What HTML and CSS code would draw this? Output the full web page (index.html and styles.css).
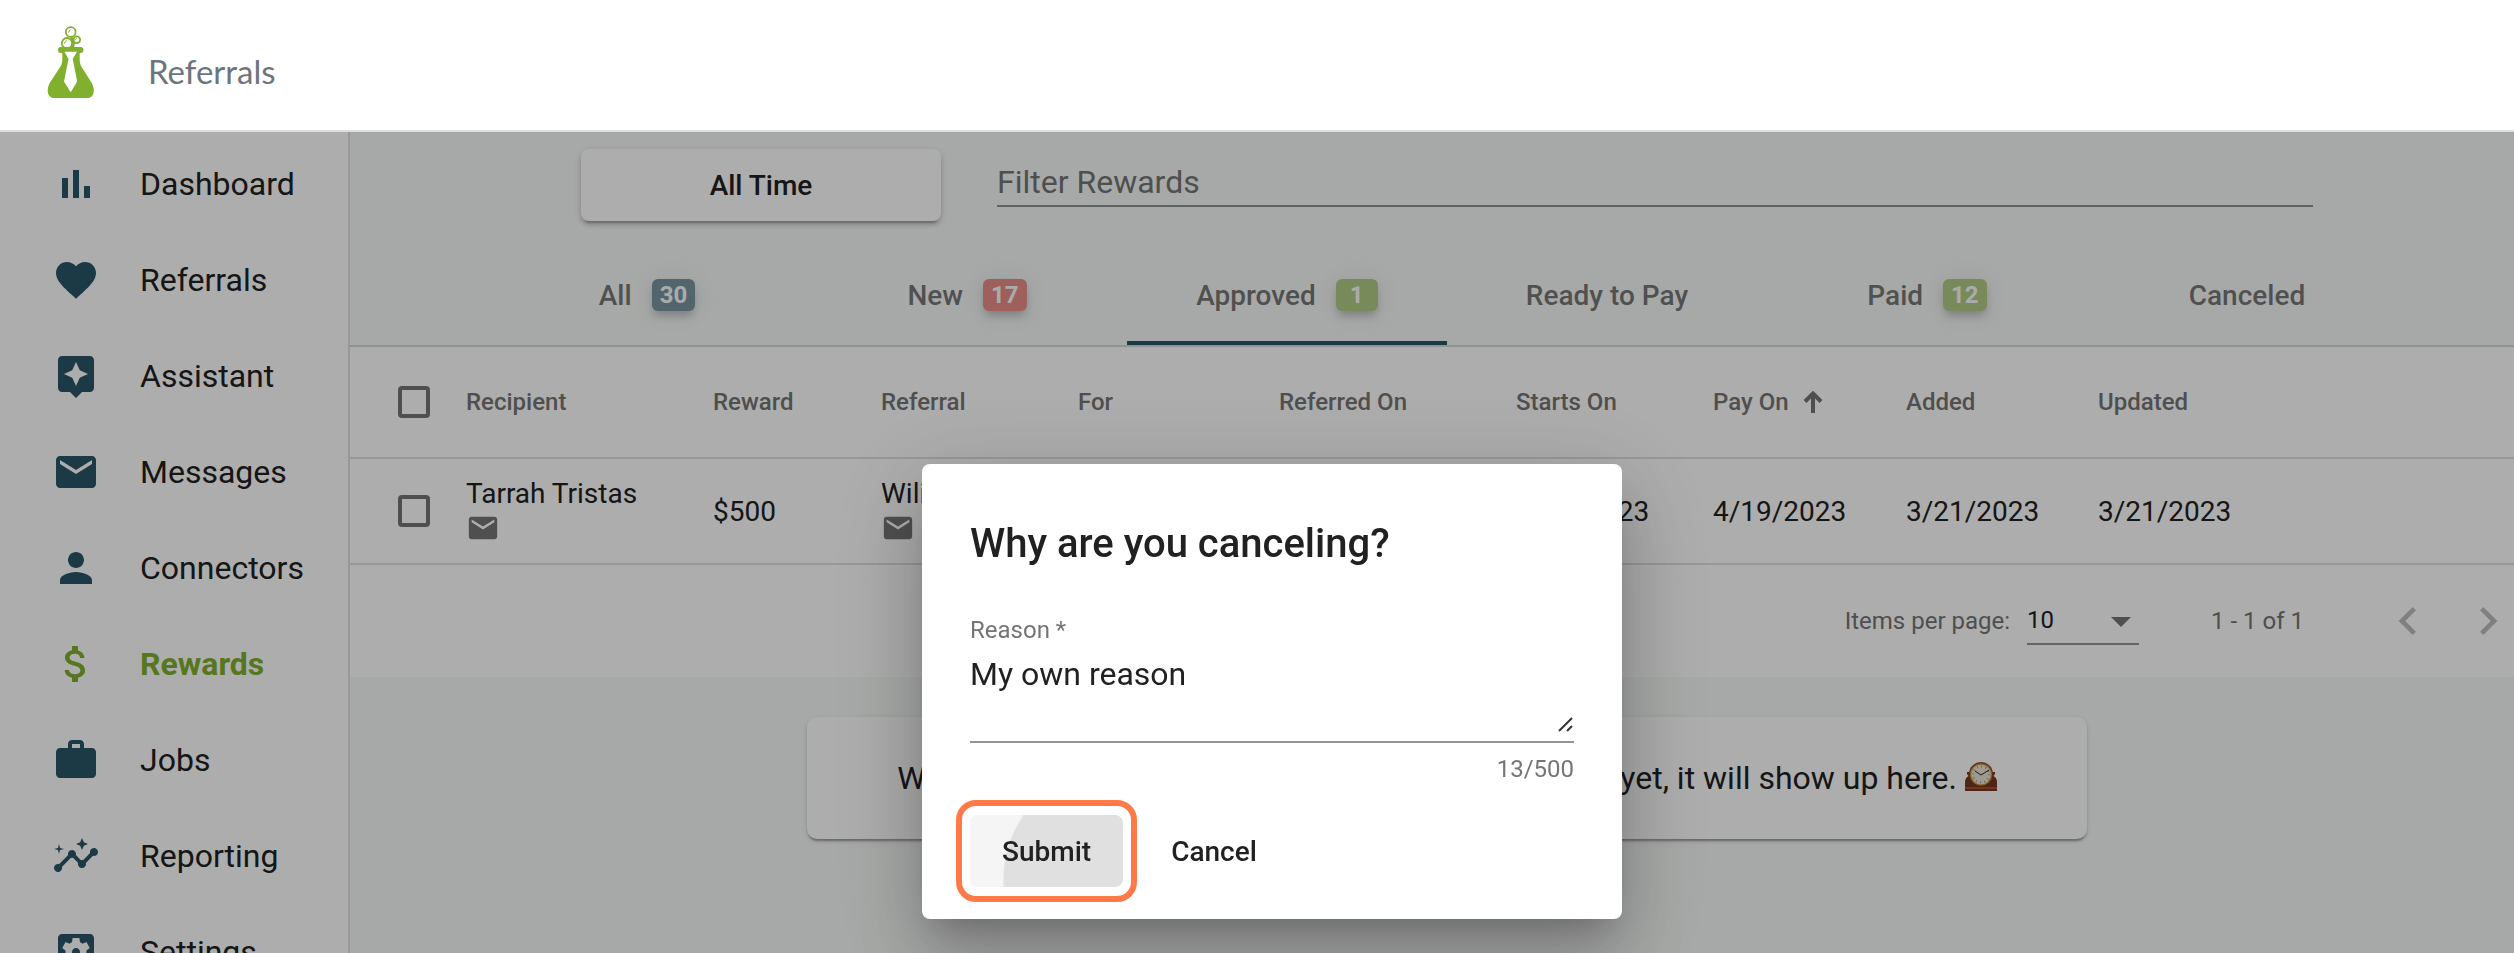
FILE: index.html
```html
<!DOCTYPE html>
<html lang="en">
<head>
<meta charset="utf-8">
<title>Referrals - Rewards</title>
<link rel="stylesheet" href="styles.css">
</head>
<body>
<svg class="defs" aria-hidden="true">
  <symbol id="mail" viewBox="0 0 24 24"><path d="M20 4H4c-1.100 0-1.990.9-1.990 2L2 18c0 1.100.9 2 2 2h16c1.100 0 2-.9 2-2V6c0-1.100-.9-2-2-2zm0 4l-8 5-8-5V6l8 5 8-5v2z"/></symbol>
</svg>
<header class="topbar">
  <svg class="logo" viewBox="46 24 50 76" aria-label="Logo">
    <g fill="none" stroke="#80b02d" stroke-width="1.800">
      <circle cx="70.700" cy="32" r="4.900"/><circle cx="76.800" cy="39.700" r="3.300"/><circle cx="67" cy="43.200" r="5.200"/>
      <path d="M68.500 32.500q0-2 2-2.700M64.500 43.500q0-2.300 2.400-3M75.500 39.700q0-1 1.200-1.200" stroke-width="1"/>
    </g>
    <path fill="#80b02d" d="M70.500 37l3 .5-.5 3 2 2.500-1 4.500h-3.500l1-4z"/>
    <path fill="#80b02d" fill-rule="evenodd" d="M61 47h19.500a3 3 0 0 1 0 6h-.8v7c0 3 .8 5 2.500 8l9.300 14.500c4.500 8 2 15.500-4 15.500H54c-6 0-8.500-7.500-4-15.500L59.500 68c2-3 2.800-5 2.800-8v-7H61a3 3 0 0 1 0-6zM64.500 51.700l4 7.300-4.500 22.500 6.700 10.700 6.500-10.700-4.500-22.500 4.300-7.300z"/>
  </svg>
  <span class="brand">Referrals</span>
</header>
<div class="shell">
  <nav class="sidebar">
    <a class="nav-item" href="#dashboard"><svg viewBox="0 0 24 24"><path d="M5 9h3v10H5zM10.500 5h3v14h-3zM16 13h3v6h-3z"/></svg>Dashboard</a>
    <a class="nav-item" href="#referrals"><svg viewBox="0 0 24 24"><path d="M12 21.350l-1.450-1.320C5.400 15.360 2 12.280 2 8.500 2 5.420 4.420 3 7.500 3c1.740 0 3.410.81 4.500 2.090C13.090 3.810 14.760 3 16.500 3 19.580 3 22 5.420 22 8.500c0 3.780-3.400 6.860-8.550 11.540L12 21.350z"/></svg>Referrals</a>
    <a class="nav-item" href="#assistant"><svg viewBox="0 0 24 24"><path d="M19 2H5c-1.100 0-2 .9-2 2v14c0 1.100.9 2 2 2h4l3 3 3-3h4c1.100 0 2-.9 2-2V4c0-1.100-.9-2-2-2zm-5.120 10.880L12 17l-1.880-4.120L6 11l4.120-1.880L12 5l1.880 4.120L18 11l-4.120 1.880z"/></svg>Assistant</a>
    <a class="nav-item" href="#messages"><svg><use href="#mail"/></svg>Messages</a>
    <a class="nav-item" href="#connectors"><svg viewBox="0 0 24 24"><path d="M12 12c2.210 0 4-1.790 4-4s-1.790-4-4-4-4 1.790-4 4 1.790 4 4 4zm0 2c-2.670 0-8 1.340-8 4v2h16v-2c0-2.660-5.330-4-8-4z"/></svg>Connectors</a>
    <a class="nav-item nav-item-active" href="#rewards"><svg viewBox="0 0 24 24"><path d="M11.800 10.900c-2.270-.59-3-1.200-3-2.150 0-1.090 1.010-1.850 2.700-1.850 1.780 0 2.440.85 2.500 2.100h2.210c-.07-1.720-1.120-3.300-3.210-3.810V3h-3v2.160c-1.940.42-3.500 1.680-3.500 3.610 0 2.310 1.910 3.460 4.700 4.130 2.500.6 3 1.480 3 2.410 0 .69-.49 1.790-2.700 1.790-2.060 0-2.870-.92-2.980-2.100h-2.200c.12 2.190 1.760 3.420 3.680 3.830V21h3v-2.150c1.950-.37 3.500-1.500 3.500-3.550 0-2.840-2.430-3.810-4.700-4.400z"/></svg>Rewards</a>
    <a class="nav-item" href="#jobs"><svg viewBox="0 0 24 24"><path d="M20 6h-4V4c0-1.110-.89-2-2-2h-4c-1.110 0-2 .89-2 2v2H4c-1.110 0-1.990.89-1.990 2L2 19c0 1.110.89 2 2 2h16c1.110 0 2-.89 2-2V8c0-1.110-.89-2-2-2zm-6 0h-4V4h4v2z"/></svg>Jobs</a>
    <a class="nav-item" href="#reporting"><svg viewBox="0 0 24 24"><path d="M21 8c-1.450 0-2.260 1.440-1.930 2.510l-3.550 3.560c-.3-.09-.74-.09-1.040 0l-2.550-2.550C12.270 10.450 11.460 9 10 9c-1.450 0-2.270 1.440-1.930 2.520l-4.560 4.550C2.440 15.740 1 16.550 1 18c0 1.100.9 2 2 2 1.450 0 2.260-1.440 1.930-2.510l4.550-4.560c.3.09.74.09 1.040 0l2.550 2.550C12.730 16.550 13.540 18 15 18c1.450 0 2.270-1.440 1.930-2.520l3.560-3.550C21.560 12.260 23 11.450 23 10c0-1.100-.9-2-2-2zM15 9l.94-2.070L18 6l-2.060-.93L15 3l-.92 2.070L12 6l2.080.93zM3.500 11L4 9l2-.5L4 8l-.5-2L3 8l-2 .5L3 9z"/></svg>Reporting</a>
    <a class="nav-item" href="#settings"><svg viewBox="0 0 24 24"><path d="M12 10c-1.100 0-2 .9-2 2s.9 2 2 2 2-.9 2-2-.9-2-2-2zm7-7H5c-1.110 0-2 .9-2 2v14c0 1.100.89 2 2 2h14c1.110 0 2-.9 2-2V5c0-1.100-.89-2-2-2zm-1.750 9c0 .23-.02.46-.05.68l1.480 1.160c.13.11.17.3.08.45l-1.400 2.420c-.09.15-.27.21-.43.15l-1.740-.7c-.36.28-.76.51-1.180.69l-.26 1.850c-.03.17-.18.3-.35.3h-2.800c-.17 0-.32-.13-.35-.29l-.26-1.850c-.43-.18-.82-.41-1.180-.69l-1.740.7c-.16.06-.34 0-.43-.15l-1.400-2.420c-.09-.15-.05-.34.08-.45l1.480-1.160c-.03-.23-.05-.46-.05-.69s.02-.46.05-.68l-1.480-1.160c-.13-.11-.17-.3-.08-.45l1.400-2.420c.09-.15.27-.21.43-.15l1.740.7c.36-.28.76-.51 1.180-.69l.26-1.850c.03-.17.18-.3.35-.3h2.800c.17 0 .32.13.35.29l.26 1.850c.43.18.82.41 1.180.69l1.740-.7c.16-.06.34 0 .43.150l1.400 2.420c.09.15.05.34-.08.45l-1.480 1.160c.03.23.05.46.05.69z"/></svg>Settings</a>
  </nav>
  <main class="content">
    <div class="filters">
      <button class="range" type="button">All Time</button>
      <input class="filter-input" type="text" placeholder="Filter Rewards" aria-label="Filter Rewards">
    </div>
    <div class="tabs" role="tablist">
      <button class="tab" role="tab" type="button"><span class="tab-label">All <span class="badge">30</span></span></button>
      <button class="tab" role="tab" type="button"><span class="tab-label">New <span class="badge badge-red">17</span></span></button>
      <button class="tab tab-active" role="tab" type="button" aria-selected="true"><span class="tab-label">Approved <span class="badge badge-green">1</span></span></button>
      <button class="tab" role="tab" type="button"><span class="tab-label">Ready to Pay</span></button>
      <button class="tab" role="tab" type="button"><span class="tab-label">Paid <span class="badge badge-green">12</span></span></button>
      <button class="tab" role="tab" type="button"><span class="tab-label">Canceled</span></button>
    </div>
    <section class="panel">
      <table class="rewards">
        <colgroup>
          <col class="c-check"><col class="c-recipient"><col class="c-reward"><col class="c-referral"><col class="c-for"><col class="c-referred"><col class="c-starts"><col class="c-pay"><col class="c-added"><col>
        </colgroup>
        <thead>
          <tr>
            <th><input class="check" type="checkbox" aria-label="Select all"></th>
            <th>Recipient</th><th>Reward</th><th>Referral</th><th>For</th><th>Referred On</th><th>Starts On</th>
            <th><span class="sorted">Pay On <svg viewBox="0 0 20 22"><path d="M10 22V3M2 10.500l8-8 8 8"/></svg></span></th>
            <th>Added</th><th>Updated</th>
          </tr>
        </thead>
        <tbody>
          <tr>
            <td><input class="check" type="checkbox" aria-label="Select Tarrah Tristas"></td>
            <td><div class="person">Tarrah Tristas<svg class="mail"><use href="#mail"/></svg></div></td>
            <td>$500</td>
            <td><div class="person">Wiliam Stone<svg class="mail"><use href="#mail"/></svg></div></td>
            <td>Engineer</td>
            <td>3/21/2023</td>
            <td>3/21/2023</td>
            <td>4/19/2023</td>
            <td>3/21/2023</td>
            <td>3/21/2023</td>
          </tr>
        </tbody>
      </table>
      <div class="pager">
        <label for="page-size">Items per page:</label>
        <span class="size-box">
          <select id="page-size" class="size"><option>10</option></select>
          <svg class="caret" viewBox="0 0 20 10"><path d="M0 0h20L10 10z"/></svg>
        </span>
        <span class="range-label">1 - 1 of 1</span>
        <button class="page-btn" type="button" aria-label="Previous page"><svg viewBox="0 0 24 24"><path d="M15.410 7.410L14 6l-6 6 6 6 1.410-1.410L10.830 12z"/></svg></button>
        <button class="page-btn" type="button" aria-label="Next page"><svg viewBox="0 0 24 24"><path d="M10 6L8.590 7.410 13.170 12l-4.580 4.590L10 18l6-6z"/></svg></button>
      </div>
    </section>
    <div class="notice">
      <p>We are on it! If a new reward isn't in this panel here yet, it will show up here.
        <svg class="clock" viewBox="0 0 32 29" role="img" aria-label="Mantelpiece clock">
          <path fill="#7a3423" d="M2 10h28v2l-1.500 2c2 1 3.500 3 3.500 6v9H0v-9c0-3 1.500-5 3.500-6L2 12z"/>
          <path fill="#a04e39" d="M0 25h32v2H0z"/>
          <circle cx="16" cy="12" r="12" fill="#8c4330"/>
          <circle cx="16" cy="12.500" r="11" fill="#c09a38"/>
          <circle cx="16" cy="12.500" r="9.800" fill="#e9e4d4"/>
          <circle cx="16" cy="12.500" r="8" fill="none" stroke="#8a8577" stroke-width="2" stroke-dasharray=".8 3.390"/>
          <path d="M10 9l6 4 8-5" fill="none" stroke="#222" stroke-width="1"/>
        </svg></p>
    </div>
  </main>
</div>
<div class="overlay">
  <form class="dialog" role="dialog" aria-labelledby="dlg-title">
    <h2 id="dlg-title">Why are you canceling?</h2>
    <label class="field-label" for="reason">Reason *</label>
    <div class="field">
      <textarea id="reason" maxlength="500">My own reason</textarea>
      <svg class="grip" viewBox="0 0 15 15"><path d="M1 14L14 1M9 14l5-5"/></svg>
    </div>
    <div class="counter">13/500</div>
    <div class="actions">
      <button class="btn btn-submit" type="button">Submit</button>
      <button class="btn" type="button">Cancel</button>
    </div>
  </form>
</div>
</body>
</html>
```
FILE: styles.css
```css
* { box-sizing: border-box; }
html, body { height: 100%; margin: 0; overflow: hidden; }
body {
  display: flex;
  flex-direction: column;
  font-family: Roboto, sans-serif;
  font-size: 28px;
  color: #212121;
  background: #f7faf8;
}
button, input, select, textarea { font: inherit; color: inherit; border: 0; margin: 0; background: none; outline: 0; }
.defs { position: absolute; width: 0; height: 0; }

.topbar {
  flex: none;
  display: flex;
  align-items: center;
  height: 132px;
  padding-left: 46px;
  background: #fff;
  border-bottom: 2px solid #dcdfde;
}
.logo { width: 50px; height: 76px; margin-top: -6px; }
.brand { margin: 12px 0 0 52px; font: 33px/40px Lato, sans-serif; color: #6c757d; }

.shell { flex: 1; min-height: 0; display: flex; }
.sidebar { flex: none; width: 350px; padding-top: 4px; background: #fff; border-right: 2px solid #e0e0e0; overflow: hidden; }
.nav-item {
  display: flex;
  align-items: center;
  gap: 40px;
  height: 96px;
  padding-left: 52px;
  font-size: 32px;
  color: #212121;
  text-decoration: none;
}
.nav-item svg { flex: none; width: 48px; height: 48px; fill: #2a5568; }
.nav-item-active { color: #80b02d; font-weight: 700; }
.nav-item-active svg { fill: #80b02d; }

.content { flex: 1; min-width: 0; display: flex; flex-direction: column; }
.filters { display: flex; gap: 56px; padding: 17px 201px 0 231px; }
.range {
  width: 360px;
  height: 72px;
  font-weight: 500;
  background: #fff;
  border-radius: 8px;
  box-shadow: 0 6px 2px -4px rgba(0,0,0,.2), 0 4px 4px rgba(0,0,0,.14), 0 2px 10px rgba(0,0,0,.12);
}
.filter-input { flex: 1; min-width: 0; height: 58px; padding: 10px 0 0; font-size: 32px; border-bottom: 2px solid #8f9590; }
.filter-input::placeholder { color: #757575; opacity: 1; }

.tabs { display: flex; justify-content: center; height: 126px; padding-left: 30px; border-bottom: 2px solid #d6d9d7; }
.tab { width: 320px; padding: 28px 0 4px; font-weight: 500; }
.tab-active { border-bottom: 4px solid #2a5568; padding-bottom: 0; }
.tab-label { display: flex; align-items: center; justify-content: center; gap: 20px; opacity: .6; }
.badge {
  min-width: 42px;
  padding: 0 8px;
  border-radius: 6px;
  background: #265365;
  color: #fff;
  font-size: 24px;
  font-weight: 700;
  line-height: 32px;
  box-shadow: 0 6px 10px -2px rgba(0,0,0,.4), 0 2px 28px rgba(0,0,60,.12);
}
.badge-red { background: #e34441; }
.badge-green { background: #84ad3a; }

.panel { background: #fff; }
.rewards { width: 100%; table-layout: fixed; border-collapse: collapse; text-align: left; }
.rewards th, .rewards td { padding: 0; border-bottom: 2px solid #e0e0e0; white-space: nowrap; }
.rewards th { height: 111px; font-size: 24px; font-weight: 500; color: #757575; }
.rewards td { height: 106px; }
.rewards th:first-child, .rewards td:first-child { padding-left: 48px; }
.c-check { width: 116px; }
.c-recipient { width: 247px; }
.c-reward { width: 168px; }
.c-referral { width: 197px; }
.c-for { width: 201px; }
.c-referred { width: 237px; }
.c-starts { width: 197px; }
.c-pay { width: 193px; }
.c-added { width: 192px; }
.check { display: block; appearance: none; width: 32px; height: 32px; border: 4px solid #757575; border-radius: 4px; }
.sorted { display: flex; align-items: center; gap: 14px; }
.sorted svg { width: 20px; height: 22px; fill: none; stroke: #757575; stroke-width: 4; }
.person { display: flex; flex-direction: column; line-height: 34px; }
.mail { width: 34px; height: 34px; fill: #757575; }

.pager { display: flex; align-items: center; justify-content: flex-end; height: 112px; font-size: 24px; color: #757575; }
.size-box { position: relative; margin: 0 72px 0 17px; }
.size { display: block; appearance: none; width: 112px; height: 48px; padding: 0; color: #212121; border-bottom: 2px solid #949494; }
.caret { position: absolute; right: 8px; top: 20px; width: 20px; height: 10px; fill: #757575; pointer-events: none; }
.range-label { margin-right: 64px; }
.page-btn { width: 80px; height: 80px; padding: 12px; flex: none; }
.page-btn svg { display: block; width: 56px; height: 56px; fill: #bdbdbd; }
.page-btn:last-child { margin-right: -14px; }

.notice {
  align-self: center;
  width: 1280px;
  margin: 40px 0 0 30px;
  padding: 40px;
  background: #fff;
  border-radius: 10px;
  text-align: center;
  box-shadow: 0 4px 2px -2px rgba(0,0,0,.2), 0 2px 2px rgba(0,0,0,.14), 0 2px 6px rgba(0,0,0,.12);
}
.notice p { margin: 0; font-size: 32px; line-height: 42px; white-space: nowrap; }
.clock { width: 32px; height: 29px; vertical-align: -2px; }

.overlay {
  position: fixed;
  inset: 132px 0 0;
  display: flex;
  justify-content: center;
  align-items: flex-start;
  padding: 332px 0 0 30px;
  background: rgba(0,0,0,.32);
  overflow: hidden;
}
.dialog {
  width: 700px;
  padding: 48px 48px 32px;
  background: #fff;
  border-radius: 8px;
  box-shadow: 0 22px 30px -14px rgba(0,0,0,.2), 0 48px 76px 6px rgba(0,0,0,.14), 0 18px 92px 16px rgba(0,0,0,.12);
}
.dialog h2 { margin: 0; font-size: 40px; line-height: 64px; font-weight: 500; }
.field-label { display: block; margin-top: 38px; font-size: 24px; line-height: 32px; color: #757575; }
.field { position: relative; height: 97px; border-bottom: 2px solid #949494; }
.field textarea { display: block; width: 100%; height: 88px; padding: 8px 0 0; font-size: 32px; line-height: 40px; resize: none; overflow: hidden; }
.grip { position: absolute; right: 1px; bottom: 9px; width: 15px; height: 15px; fill: none; stroke: #333; stroke-width: 2; }
.counter { margin-top: 10px; font-size: 24px; line-height: 32px; text-align: right; color: #757575; }
.actions { display: flex; gap: 16px; margin-top: 30px; }
.btn { position: relative; height: 72px; padding: 0 32px; font-weight: 500; border-radius: 8px; }
.btn-submit { background: radial-gradient(circle at 149px 65px, #e0e0e0 115px, #f5f5f5 116px); }
.btn-submit::after { content: ""; position: absolute; inset: -15px -14px; border: 6px solid #ff7a48; border-radius: 20px; }
```
